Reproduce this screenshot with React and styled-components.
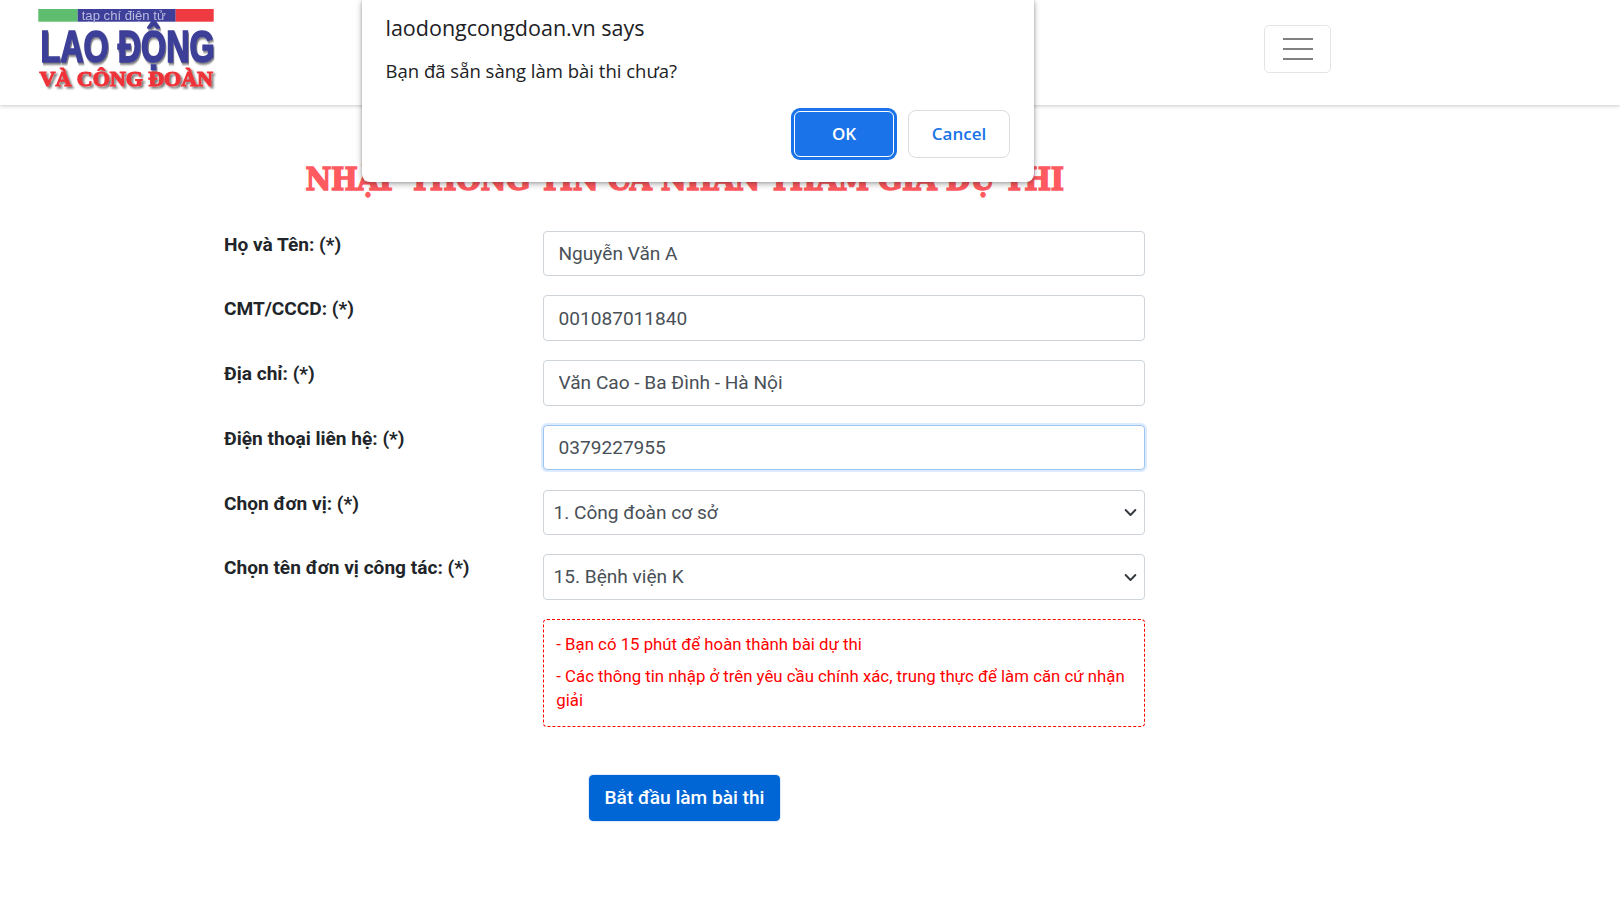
import React from "react";
import styled, { createGlobalStyle } from "styled-components";

const Global = createGlobalStyle`
  html, body { margin: 0; padding: 0; background: #fff; }
  body { font-family: Roboto, "Liberation Sans", sans-serif; color: #212529; overflow: hidden; }
  * { box-sizing: border-box; }
`;
const Page = styled.div`position: relative; width: 1620px; height: 900px; overflow: hidden;`;
const Header = styled.header`
  height: 105px; display: flex; align-items: flex-start; justify-content: space-between;
  padding: 9px 289px 0 38px; background: #fff; box-shadow: 0 1px 4px rgba(0,0,0,.22);
`;
const LogoBox = styled.svg`display: block; width: 180px; height: 84px;`;
const Burger = styled.button`
  width: 67px; height: 48px; margin-top: 16px; padding: 0; background: transparent;
  border: 1px solid #e4e4e4; border-radius: 5px; display: flex; align-items: center; justify-content: center;
`;
const Main = styled.main`width: 921px; margin-left: 224px;`;
const Title = styled.h1`
  margin: 52px 0 0; height: 44px; line-height: 44px; text-align: center; white-space: nowrap;
  font-family: "DejaVu Serif", serif; font-stretch: condensed; font-size: 31.5px; font-weight: 700; color: #ff5a5f;
  -webkit-text-stroke: 1.4px #ff5a5f; letter-spacing: -.42px;
`;
const Form = styled.form`display: flex; flex-direction: column; gap: 19.2px; margin-top: 29.8px;`;
const Row = styled.div`display: grid; grid-template-columns: 318.5px 602.5px;`;
const Label = styled.label`font-size: 19.1px; line-height: 27px; font-weight: 700; color: #212529;`;
const Input = styled.input`
  display: block; width: 100%; height: 45.5px; padding: 0 15px; font: 400 19.1px Roboto, sans-serif; color: #495057;
  background: #fff; border: 1px solid ${p => p.$focus ? "#9ec5f2" : "#ced4da"}; border-radius: 4px; outline: none;
  box-shadow: ${p => p.$focus ? "0 0 0 2px rgba(13,110,253,.14)" : "none"};
`;
const SelectWrap = styled.div`position: relative;`;
const Select = styled.select`
  display: block; width: 100%; height: 45.5px; padding: 0 34px 0 10px; font: 400 19.1px Roboto, sans-serif; color: #495057;
  background: #fff; border: 1px solid #ced4da; border-radius: 4px; outline: none; appearance: none;
`;
const Chevron = styled.svg`position: absolute; right: 8px; top: 16.5px; width: 13px; height: 13px; pointer-events: none;`;
const Note = styled.div`
  grid-column: 2; padding: 12px 12px 13px 12.8px; border: 1px dashed #f00; border-radius: 4px; color: #f00;
  font-size: 16.8px; line-height: 24.5px;
`;
const NoteLine = styled.p`margin: 0 0 7.5px; &:last-child { margin-bottom: 0; }`;
const SubmitRow = styled.div`display: flex; justify-content: center; margin-top: 47.6px;`;
const Submit = styled.button`
  width: 191px; height: 46px; padding: 0; font: 500 19.1px Roboto, sans-serif; color: #fff; background: #0066d6;
  border: 1px solid #0066d6; border-radius: 4px; box-shadow: 0 0 0 1px rgba(0,102,214,.12);
`;
const Dialog = styled.div`
  position: absolute; top: 0; left: 362px; width: 672px; height: 182px; padding: 14px 24px 0; background: #fff;
  border-radius: 0 0 8px 8px; box-shadow: 0 2px 6px rgba(0,0,0,.32), 0 0 3px rgba(0,0,0,.2);
  font-family: "Open Sans", "Noto Sans", sans-serif; color: #202124;
`;
const DialogTitle = styled.div`font-size: 21.5px; line-height: 28px; margin-left: -.5px;`;
const DialogBody = styled.div`margin-top: 15px; font-size: 18.5px; line-height: 28px; margin-left: -.5px;`;
const DialogActions = styled.div`display: flex; justify-content: flex-end; align-items: center; gap: 14px; margin-top: 25px;`;
const OkButton = styled.button`
  width: 100px; height: 46px; padding: 0 0 2px; font: 600 17px "Open Sans", sans-serif; color: #fff; background: #1a73e8;
  border: 1px solid #fff; border-radius: 6px; box-shadow: 0 0 0 3px #1a73e8; outline: none;
`;
const CancelButton = styled.button`
  width: 102px; height: 48px; padding: 0 0 2px; font: 600 17px "Open Sans", sans-serif; color: #1a73e8; background: #fff;
  border: 1px solid #dadce0; border-radius: 8px;
`;

const Logo = () => (
  <LogoBox viewBox="0 0 180 84">
    <defs>
      <filter id="soft" x="-5%" y="-5%" width="110%" height="110%"><feGaussianBlur stdDeviation=".3" /></filter>
      <filter id="shade" x="-5%" y="-10%" width="115%" height="130%">
        <feGaussianBlur in="SourceAlpha" stdDeviation=".9" />
        <feOffset dx="1.5" dy="1.5" />
        <feComponentTransfer><feFuncA type="linear" slope=".55" /></feComponentTransfer>
        <feMerge><feMergeNode /><feMergeNode in="SourceGraphic" /></feMerge>
      </filter>
    </defs>
    <rect x=".3" y="0" width="39.4" height="12.7" fill="#5fbd6f" />
    <rect x="39.7" y="0" width="98" height="12.7" fill="#3d3f98" />
    <rect x="137.7" y="0" width="38" height="12.7" fill="#ef3a42" />
    <text x="43.7" y="10.5" fontFamily="Liberation Sans" fontSize="13" fill="#b9bbe0" textLength="84" lengthAdjust="spacingAndGlyphs" filter="url(#soft)">tạp chí điện tử</text>
    <text transform="translate(2.5 52.5) scale(.735 1)" fontFamily="Liberation Sans" fontWeight="700" fontSize="44" fill="#3d3f98" stroke="#3d3f98" strokeWidth="1.7" filter="url(#shade)">LAO ĐỘNG</text>
    <text x="1.5" y="77" fontFamily="Liberation Serif" fontWeight="700" fontSize="20" fill="#ee3338" stroke="#ee3338" strokeWidth="1.1" textLength="173.5" lengthAdjust="spacingAndGlyphs" filter="url(#shade)">VÀ CÔNG ĐOÀN</text>
  </LogoBox>
);

const ChevronIcon = () => (
  <Chevron viewBox="0 0 16 16"><path d="M2 5l6 6 6-6" fill="none" stroke="#343a40" strokeWidth="2.4" strokeLinecap="round" strokeLinejoin="round" /></Chevron>
);

const fields = [
  ["Họ và Tên: (*)", "Nguyễn Văn A"],
  ["CMT/CCCD: (*)", "001087011840"],
  ["Địa chỉ: (*)", "Văn Cao - Ba Đình - Hà Nội"],
  ["Điện thoại liên hệ: (*)", "0379227955", true],
];
const selects = [
  ["Chọn đơn vị: (*)", "1. Công đoàn cơ sở"],
  ["Chọn tên đơn vị công tác: (*)", "15. Bệnh viện K"],
];

export default function App() {
  return (
    <Page>
      <Global />
      <Header>
        <Logo />
        <Burger type="button" aria-label="Menu">
          <svg width="30" height="30" viewBox="0 0 30 30"><path d="M0 5h30M0 15h30M0 25h30" stroke="#808080" strokeWidth="2" /></svg>
        </Burger>
      </Header>
      <Main>
        <Title>NHẬP THÔNG TIN CÁ NHÂN THAM GIA DỰ THI</Title>
        <Form>
          {fields.map(([l, v, f]) => (
            <Row key={l}><Label>{l}</Label><Input readOnly value={v} $focus={f} /></Row>
          ))}
          {selects.map(([l, v]) => (
            <Row key={l}>
              <Label>{l}</Label>
              <SelectWrap>
                <Select value={v} onChange={() => {}}><option>{v}</option></Select>
                <ChevronIcon />
              </SelectWrap>
            </Row>
          ))}
          <Row>
            <Note>
              <NoteLine>- Bạn có 15 phút để hoàn thành bài dự thi</NoteLine>
              <NoteLine>- Các thông tin nhập ở trên yêu cầu chính xác, trung thực để làm căn cứ nhận giải</NoteLine>
            </Note>
          </Row>
        </Form>
        <SubmitRow><Submit type="button">Bắt đầu làm bài thi</Submit></SubmitRow>
      </Main>
      <Dialog>
        <DialogTitle>laodongcongdoan.vn says</DialogTitle>
        <DialogBody>Bạn đã sẵn sàng làm bài thi chưa?</DialogBody>
        <DialogActions>
          <OkButton type="button">OK</OkButton>
          <CancelButton type="button">Cancel</CancelButton>
        </DialogActions>
      </Dialog>
    </Page>
  );
}
